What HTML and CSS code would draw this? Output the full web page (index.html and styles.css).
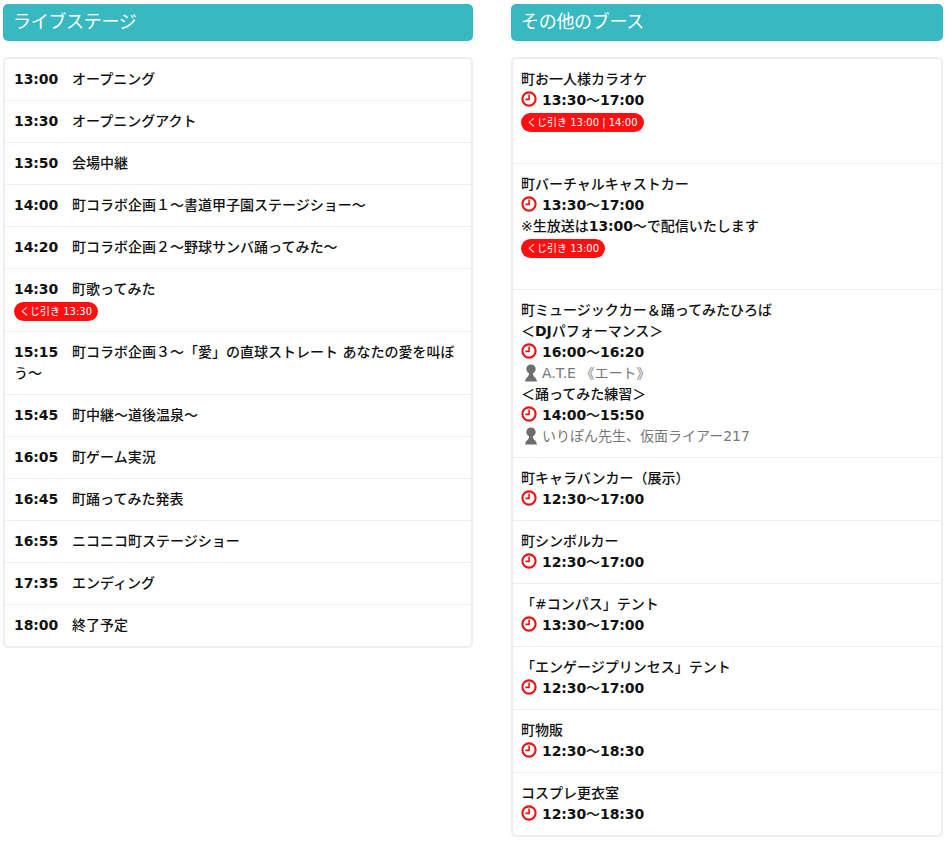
FILE: index.html
```html
<!DOCTYPE html>
<html lang="ja">
<head>
<meta charset="utf-8">
<title>タイムテーブル</title>
<link rel="stylesheet" href="styles.css">
</head>
<body>
<svg class="defs" width="0" height="0" aria-hidden="true">
  <symbol id="clock" viewBox="0 0 16 16">
    <circle cx="8" cy="8" r="6.6" fill="none" stroke="#e81414" stroke-width="2.1"></circle>
    <path d="M8.9 3.6V9.2H4.4V7.6H7.3V3.6Z" fill="#e81414"></path>
  </symbol>
  <symbol id="person" viewBox="0 0 12 18">
    <path d="M6 0.4C8.7 0.4 10.7 2.3 10.7 5C10.7 6.9 9.6 8.5 8 9.3C8 11 8.3 11.9 9.6 13C10.9 14.1 11.8 15.5 11.9 17.6H0.1C0.2 15.5 1.1 14.1 2.4 13C3.7 11.9 4 11 4 9.3C2.4 8.5 1.3 6.9 1.3 5C1.3 2.3 3.3 0.4 6 0.4Z" fill="#6e6e6e"></path>
  </symbol>
</svg>
<main class="page">
  <section class="col col-left">
    <h2 class="head">ライブステージ</h2>
    <ul class="list">
      <li class="row"><b class="t">13:00</b>　オープニング</li>
      <li class="row"><b class="t">13:30</b>　オープニングアクト</li>
      <li class="row"><b class="t">13:50</b>　会場中継</li>
      <li class="row"><b class="t">14:00</b>　町コラボ企画１～書道甲子園ステージショー～</li>
      <li class="row"><b class="t">14:20</b>　町コラボ企画２～野球サンバ踊ってみた～</li>
      <li class="row"><b class="t">14:30</b>　町歌ってみた<br><span class="badge">くじ引き 13:30</span></li>
      <li class="row"><b class="t">15:15</b>　町コラボ企画３～「愛」の直球ストレート あなたの愛を叫ぼう～</li>
      <li class="row"><b class="t">15:45</b>　町中継～道後温泉～</li>
      <li class="row"><b class="t">16:05</b>　町ゲーム実況</li>
      <li class="row"><b class="t">16:45</b>　町踊ってみた発表</li>
      <li class="row"><b class="t">16:55</b>　ニコニコ町ステージショー</li>
      <li class="row"><b class="t">17:35</b>　エンディング</li>
      <li class="row"><b class="t">18:00</b>　終了予定</li>
    </ul>
  </section>
  <section class="col col-right">
    <h2 class="head">その他のブース</h2>
    <ul class="list">
      <li class="row">町お一人様カラオケ<br><svg class="ic"><use href="#clock"></use></svg><b class="t">13:30</b>～<b class="t">17:00</b><br><span class="badge">くじ引き 13:00 | 14:00</span><br><br></li>
      <li class="row">町バーチャルキャストカー<br><svg class="ic"><use href="#clock"></use></svg><b class="t">13:30</b>～<b class="t">17:00</b><br>※生放送は<b class="t">13:00</b>～で配信いたします<br><span class="badge">くじ引き 13:00</span><br><br></li>
      <li class="row">町ミュージックカー＆踊ってみたひろば<br>＜<b class="t">DJ</b>パフォーマンス＞<br><svg class="ic"><use href="#clock"></use></svg><b class="t">16:00</b>～<b class="t">16:20</b><br><span class="who"><svg class="ic-p"><use href="#person"></use></svg>A.T.E 《エート》</span><br>＜踊ってみた練習＞<br><svg class="ic"><use href="#clock"></use></svg><b class="t">14:00</b>～<b class="t">15:50</b><br><span class="who"><svg class="ic-p"><use href="#person"></use></svg>いりぽん先生、仮面ライアー217</span></li>
      <li class="row">町キャラバンカー（展示）<br><svg class="ic"><use href="#clock"></use></svg><b class="t">12:30</b>～<b class="t">17:00</b></li>
      <li class="row">町シンボルカー<br><svg class="ic"><use href="#clock"></use></svg><b class="t">12:30</b>～<b class="t">17:00</b></li>
      <li class="row">「#コンパス」テント<br><svg class="ic"><use href="#clock"></use></svg><b class="t">13:30</b>～<b class="t">17:00</b></li>
      <li class="row">「エンゲージプリンセス」テント<br><svg class="ic"><use href="#clock"></use></svg><b class="t">12:30</b>～<b class="t">17:00</b></li>
      <li class="row">町物販<br><svg class="ic"><use href="#clock"></use></svg><b class="t">12:30</b>～<b class="t">18:30</b></li>
      <li class="row">コスプレ更衣室<br><svg class="ic"><use href="#clock"></use></svg><b class="t">12:30</b>～<b class="t">18:30</b></li>
    </ul>
  </section>
</main>
</body>
</html>
```
FILE: styles.css
```css
* { box-sizing: border-box; }
html, body { margin: 0; padding: 0; background: #fff; }
body {
  font-family: "DejaVu Sans", "Noto Sans CJK JP", sans-serif;
  font-size: 14px;
  line-height: 21px;
  color: #111;
}
.defs { position: absolute; }
.page {
  display: flex;
  gap: 38px;
  padding: 4px 3px 5px;
  align-items: flex-start;
}
.col-left { width: 470px; flex: none; }
.col-right { width: 432px; flex: none; }
.head {
  margin: 0 0 16px;
  height: 37px;
  padding: 0 10px;
  background: #38b8c0;
  border-radius: 5px;
  color: #fff;
  font-size: 18px;
  font-weight: 400;
  letter-spacing: -0.3px;
  line-height: 35px;
}
.list {
  list-style: none;
  margin: 0;
  padding: 0;
  border: 2px solid #eeeef1;
  border-radius: 5px;
}
.row {
  padding: 10px 9px;
  font-weight: 500;
  border-bottom: 1px solid #eeeeee;
}
.col-right .row { padding-left: 8px; }
.row:last-child { border-bottom: 0; }
.t { font-weight: bold; letter-spacing: -0.1px; }
.badge {
  display: inline-block;
  vertical-align: top;
  height: 19px;
  margin-top: 2px;
  padding: 0 6px;
  border-radius: 10px;
  background: #ff0f0f;
  color: #fff;
  font-size: 10px;
  font-weight: normal;
  line-height: 19px;
}
.ic {
  width: 16px;
  height: 16px;
  margin-right: 5px;
  vertical-align: -2px;
}
.ic-p {
  width: 12px;
  height: 18px;
  margin-left: 4px;
  margin-right: 5px;
  vertical-align: -4px;
}
.who { color: #777; font-weight: normal; }
```
